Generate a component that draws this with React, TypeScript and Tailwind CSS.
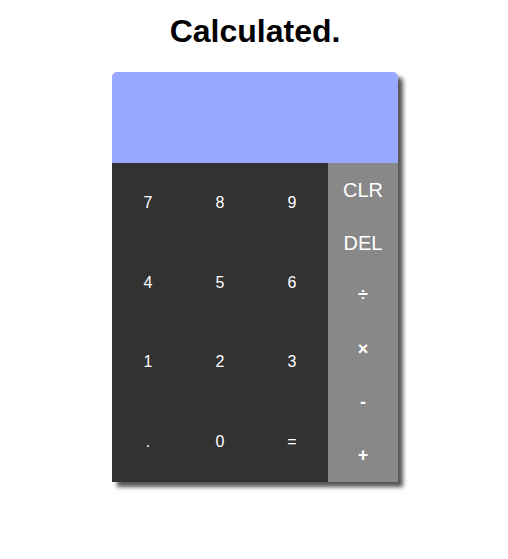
const digits = ['7', '8', '9', '4', '5', '6', '1', '2', '3', '.', '0', '=']
const ops = [
  { label: 'CLR', big: true },
  { label: 'DEL', big: true },
  { label: '÷', big: false },
  { label: '×', big: false },
  { label: '-', big: false },
  { label: '+', big: false },
]

export default function App() {
  return (
    <div className="flex min-h-[559px] flex-col items-center bg-white font-['Liberation_Sans',Arial,sans-serif]">
      <h1 className="mt-[13px] pl-[2px] text-[32px] font-bold leading-[37px] text-black">Calculated.</h1>

      <div className="ml-[2px] mt-[22px] flex w-[286px] flex-col overflow-hidden rounded-t-[5px] shadow-[5px_5px_4px_#555]">
        <div className="h-[91px] bg-[#99a9ff]" />

        <div className="flex h-[319px]">
          <div className="grid flex-1 grid-cols-3 grid-rows-4 bg-[#323232]">
            {digits.map((d) => (
              <button key={d} className="flex items-center justify-center text-[16px] text-white">
                {d}
              </button>
            ))}
          </div>

          <div className="grid w-[70px] grid-rows-6 bg-[#888888]">
            {ops.map((op) => (
              <button
                key={op.label}
                className={
                  op.big
                    ? 'flex items-center justify-center text-[20px] text-white'
                    : 'flex items-center justify-center text-[18px] font-bold text-white'
                }
              >
                {op.label}
              </button>
            ))}
          </div>
        </div>
      </div>
    </div>
  )
}
